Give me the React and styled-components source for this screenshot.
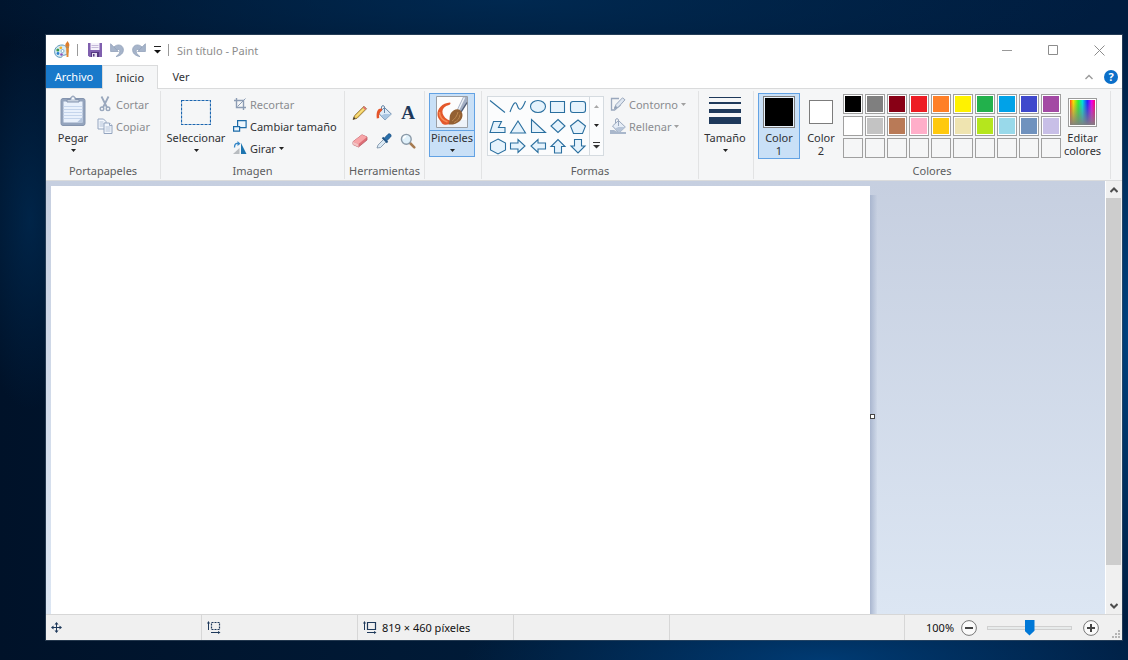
import React, { useState } from 'react';
import styled, { createGlobalStyle, css } from 'styled-components';

const colorText = '#303134';
const colorMuted = '#8a8c90';
const colorBorder = '#dadbdc';
const colorRibbon = '#f5f6f7';
const colorAccent = '#1979ca';
const colorNavy = '#1e395b';
const colorActive = '#c9e0f7';
const colorActiveBorder = '#62a2e4';

const GlobalStyle = createGlobalStyle`
    * {
        box-sizing: border-box;
    }
    body {
        margin: 0;
        font-family: 'Noto Sans', 'Open Sans', sans-serif;
        font-size: 11px;
        color: ${colorText};
    }
    button {
        margin: 0;
        padding: 0;
        border: 0;
        background: none;
        color: inherit;
        font: inherit;
    }
    svg {
        display: block;
        flex: none;
    }
`;

const Desktop = styled('div')`
    display: flex;
    height: 100vh;
    padding: 35px 6px 20px 46px;
    background:
        radial-gradient(ellipse 60px 190px at 30px 220px, rgba(0, 48, 92, 0.6), transparent),
        radial-gradient(ellipse 360px 70px at 73% 100%, rgba(0, 66, 128, 0.8), transparent),
        radial-gradient(ellipse 30px 300px at 100% 330px, rgba(0, 76, 145, 0.8), transparent),
        radial-gradient(ellipse 600px 80px at 45% 0, rgba(0, 46, 90, 0.7), transparent),
        linear-gradient(90deg, #001229, #001c3a 50%, #001d40);
`;

const Window = styled('main')`
    display: flex;
    flex: 1;
    flex-direction: column;
    min-width: 0;
    background: white;
    box-shadow: 0 0 0 1px rgba(60, 80, 100, 0.6);
`;

const TitleBar = styled('header')`
    display: flex;
    align-items: center;
    height: 30px;
    padding-left: 8px;
`;

const QuickTools = styled('div')`
    display: flex;
    align-items: center;
    gap: 8px;
    padding-left: 10px;
`;

const Rule = styled('span')`
    width: 1px;
    height: 12px;
    margin-left: 7px;
    background: #9a9a9a;
`;

const Title = styled('h1')`
    flex: 1;
    margin: 0 0 0 8px;
    font-size: 11px;
    font-weight: 400;
    color: #8c8c8c;
`;

const WindowButton = styled('button')`
    display: flex;
    align-items: center;
    justify-content: center;
    width: 46px;
    height: 28px;
`;

const TabRow = styled('nav')`
    display: flex;
    height: 24px;
    border-bottom: 1px solid ${colorBorder};
`;

const Tab = styled('button')`
    width: ${({ $wide }) => ($wide ? '56px' : '46px')};
    height: 23px;
    ${({ $file }) => $file && css`
        background: ${colorAccent};
        color: white;
    `}
    ${({ $active }) => $active && css`
        height: 24px;
        border: 1px solid ${colorBorder};
        border-bottom: 0;
        background: ${colorRibbon};
    `}
`;

const TabTools = styled('div')`
    display: flex;
    align-items: center;
    gap: 11px;
    margin-left: auto;
    padding-right: 4px;
`;

const Ribbon = styled('div')`
    display: flex;
    height: 92px;
    padding: 2px 0 1px;
    border-bottom: 1px solid ${colorBorder};
    background: ${colorRibbon};
`;

const GroupBox = styled('section')`
    display: flex;
    flex: none;
    flex-direction: column;
    justify-content: space-between;
    width: ${({ $width }) => $width}px;
    padding-top: 2px;
    border-right: 1px solid #e2e3e4;
`;

const GroupBody = styled('div')`
    display: flex;
    align-items: flex-start;
    padding-left: ${({ $inset }) => $inset}px;
`;

const GroupLabel = styled('h2')`
    margin: 0;
    font-size: 11px;
    font-weight: 400;
    line-height: 17px;
    text-align: center;
    color: #5c5d60;
`;

const BigButtonBox = styled('button')`
    width: ${({ $width }) => $width}px;
    padding-bottom: ${({ $tall }) => ($tall ? '1px' : '0')};
    border: 1px solid ${({ $active }) => ($active ? colorActiveBorder : 'transparent')};
    background: ${({ $active }) => ($active ? colorActive : 'none')};
`;

const BigIcon = styled('span')`
    display: flex;
    align-items: center;
    justify-content: center;
    height: 37px;
    border-bottom: 1px solid ${({ $split }) => ($split ? colorActiveBorder : 'transparent')};
`;

const BigLabel = styled('span')`
    display: flex;
    flex-direction: column;
    align-items: center;
    line-height: 13px;
    white-space: nowrap;
`;

const ArrowLine = styled('span')`
    display: flex;
    align-items: center;
    height: 12px;
`;

const Rows = styled('div')`
    display: flex;
    flex-direction: column;
    margin-left: ${({ $gap }) => $gap}px;
`;

const RowButton = styled('button')`
    display: flex;
    align-items: center;
    gap: 3px;
    height: 22px;
    white-space: nowrap;
    &:disabled {
        color: ${colorMuted};
    }
`;

const ToolGrid = styled('div')`
    display: grid;
    grid-template-columns: repeat(3, 24px);
    grid-auto-rows: 28px;
    padding-top: 6px;
`;

const ToolButton = styled('button')`
    display: flex;
    align-items: center;
    justify-content: center;
`;

const Letter = styled('span')`
    font: bold 19px 'Liberation Serif', serif;
    color: ${colorNavy};
`;

const Gallery = styled('div')`
    display: flex;
    height: 60px;
    margin-top: 3px;
    border: 1px solid #d5dbe0;
    background: #fbfcfd;
`;

const ShapeGrid = styled('div')`
    display: grid;
    grid-template-columns: repeat(5, 20px);
    grid-auto-rows: 20px;
    width: 101px;
`;

const GalleryScroll = styled('div')`
    display: flex;
    flex-direction: column;
    width: 14px;
    border-left: 1px solid #d5dbe0;
`;

const GalleryButton = styled('button')`
    display: flex;
    flex: 1;
    align-items: center;
    justify-content: center;
`;

const ColorSample = styled('span')`
    width: ${({ $size }) => $size}px;
    height: ${({ $size }) => $size}px;
    border: 1px solid #7c7c7c;
    background: ${({ $color }) => $color};
    box-shadow: inset 0 0 0 1px ${({ $size }) => ($size > 30 ? '#e8f2fc' : 'white')};
`;

const Palette = styled('div')`
    display: grid;
    grid-template-columns: repeat(10, 20px);
    grid-auto-rows: 20px;
    gap: 2px;
    margin: 1px 0 0 1px;
`;

const Swatch = styled('button')`
    border: 1px solid #a0a0a0;
    background: ${({ $color }) => $color || colorRibbon};
    box-shadow: inset 0 0 0 1px ${({ $color }) => ($color ? 'white' : colorRibbon)};
`;

const Spectrum = styled('span')`
    width: 29px;
    height: 29px;
    border: 1px solid #9c9c9c;
    background:
        linear-gradient(transparent 10%, #808080),
        linear-gradient(90deg, #f22, #fd0 16%, #3e3 34%, #0dd 50%, #22f 68%, #e0e 84%, #f04);
    box-shadow: inset 0 0 0 1px white;
`;

const WorkArea = styled('div')`
    display: flex;
    flex: 1;
    min-height: 0;
    background: linear-gradient(#c6cfe0, #dce6f3);
`;

const Viewport = styled('div')`
    display: flex;
    flex: 1;
    align-items: flex-start;
    overflow: hidden;
    padding: 5px 0 0 5px;
`;

const Sheet = styled('div')`
    flex: none;
    width: 819px;
    height: 460px;
    background: white;
`;

const SheetEdge = styled('div')`
    display: flex;
    align-items: center;
    width: 7px;
    height: 460px;
    background: linear-gradient(90deg, #a9b6cf, rgba(190, 200, 220, 0.2)) 0 9px no-repeat;
`;

const Handle = styled('span')`
    width: 5px;
    height: 5px;
    border: 1px solid #444;
    background: white;
`;

const ScrollBar = styled('div')`
    display: flex;
    flex-direction: column;
    width: 17px;
    border-left: 1px solid white;
    background: #f0f0f0;
`;

const ScrollButton = styled('button')`
    display: flex;
    align-items: center;
    justify-content: center;
    height: 17px;
`;

const ScrollTrack = styled('div')`
    flex: 1;
`;

const ScrollThumb = styled('div')`
    height: 92%;
    margin-right: 1px;
    background: #cdcdcd;
`;

const StatusBar = styled('footer')`
    display: flex;
    height: 26px;
    border-top: 1px solid #d7d7d7;
    background: #f0f0f0;
    color: #111;
`;

const StatusCell = styled('div')`
    display: flex;
    flex: ${({ $grow }) => ($grow ? '1' : 'none')};
    align-items: center;
    gap: 5px;
    width: 156px;
    padding-left: 5px;
    border-right: 1px solid #d7d7d7;
`;

const Zoom = styled('div')`
    display: flex;
    align-items: center;
    padding-left: 21px;
`;

const ZoomLabel = styled('label')`
    width: 35px;
`;

const Slider = styled('input')`
    appearance: none;
    width: 85px;
    height: 16px;
    margin: 0 11px 0 10px;
    background: none;
    &::-webkit-slider-runnable-track {
        height: 4px;
        border: 1px solid #d0d0d0;
        background: #e7eaea;
    }
    &::-webkit-slider-thumb {
        appearance: none;
        width: 10px;
        height: 16px;
        margin-top: -7px;
        background: #0078d7;
        clip-path: polygon(0 0, 100% 0, 100% 70%, 50% 100%, 0 70%);
    }
`;

const Grip = styled('span')`
    display: flex;
    align-items: flex-end;
    height: 100%;
    padding: 0 2px 2px 13px;
`;

const Caret = ({ color = '#222' }) => (
    <svg width="5" height="3" viewBox="0 0 5 3">
        <path d="M0 0h5L2.500 3z" fill={color} />
    </svg>
);

const CaretUp = () => (
    <svg width="5" height="3" viewBox="0 0 5 3">
        <path d="M0 3h5L2.500 0z" fill="#a8a8a8" />
    </svg>
);

const PaintLogo = () => (
    <svg width="16" height="18" viewBox="0 0 16 18">
        <path d="M8 4C3.600 4 .6 7 .6 10.800c0 3.400 2.600 5.600 5.700 5.600 2 0 1.700-1.600 3-2 1.900-.5 4.400-.5 4.700-3.600C14.300 7 11.400 4 8 4z" fill="#d8ecf6" stroke="#6199b9" />
        <circle cx="3.800" cy="9" r="1.500" fill="#3a9c4a" />
        <circle cx="6.800" cy="6.800" r="1.400" fill="#efb22c" />
        <circle cx="4" cy="12.500" r="1.400" fill="#2b7fd0" />
        <circle cx="7.500" cy="13.500" r="1.300" fill="#8b54b5" />
        <circle cx="8.500" cy="10" r="1.500" fill="white" stroke="#6199b9" strokeWidth=".7" />
        <path d="M12 5h3l-.6 11h-1.800z" fill="#e38a32" />
        <path d="M11.500 5.500c-.6-3 .8-3 2-5.500 1 2 2.500 3 1.700 5.500z" fill="#dd7c2b" />
        <path d="M11.800 5.500h3.200v1.500h-3.200z" fill="#b98a55" />
    </svg>
);

const SaveIcon = () => (
    <svg width="14" height="14" viewBox="0 0 14 14">
        <path d="M0 0h14v14H1.500L0 12.500z" fill="#7f5fae" />
        <path d="M2.500 0h9v7h-9z" fill="#f4f1fa" />
        <path d="M3.500 2.500h7M3.500 4.500h7" stroke="#c5b9d9" />
        <path d="M3 9h8v5H3z" fill="#54377f" />
        <path d="M4 10h5v4H4z" fill="#e5dff0" />
        <path d="M5 11h1.500v2.500H5z" fill="#54377f" />
    </svg>
);

const UndoIcon = ({ flip }) => (
    <svg width="14" height="14" viewBox="0 0 14 14">
        <g transform={flip ? 'translate(14 0) scale(-1 1)' : undefined}>
            <path d="M4 4C7 .8 12.500 1.300 13.300 6c.6 4-2.500 6.800-7.300 7.600 3-2.200 4.300-4.200 3.700-6.100C9.200 6 7.500 6 6 7.500z" fill="#a6b4ca" stroke="#93a2ba" strokeWidth=".8" />
            <path d="M.6.8v7.700h7.800z" fill="#a6b4ca" stroke="#93a2ba" strokeWidth=".8" />
        </g>
    </svg>
);

const MenuIcon = () => (
    <svg width="7" height="8" viewBox="0 0 7 8">
        <path d="M0 .5h7" stroke="#222" />
        <path d="M0 4h7L3.500 7.500z" fill="#111" />
    </svg>
);

const MinimizeIcon = () => (
    <svg width="10" height="10" viewBox="0 0 10 10"><path d="M0 5.500h10" stroke="#999" /></svg>
);

const MaximizeIcon = () => (
    <svg width="10" height="10" viewBox="0 0 10 10">
        <path d="M.5.500h9v9h-9z" fill="none" stroke="#8c8c8c" />
    </svg>
);

const CloseIcon = () => (
    <svg width="11" height="11" viewBox="0 0 11 11"><path d="M.5.500l10 10M10.500.500l-10 10" stroke="#8c8c8c" /></svg>
);

const ChevronIcon = ({ down, bold }) => (
    <svg width="8" height="6" viewBox="0 0 8 6">
        <path
            d={down ? 'M.5 1L4 4.500 7.500 1' : 'M.5 5L4 1.500 7.500 5'}
            fill="none"
            stroke={bold ? '#4d4d4d' : '#9a9a9a'}
            strokeWidth={bold ? 2 : 1.4}
        />
    </svg>
);

const HelpMark = styled('button')`
    width: 14px;
    height: 14px;
    border-radius: 50%;
    background: #0b6fc9;
    font-weight: 700;
    line-height: 14px;
    color: white;
`;

const PasteIcon = () => (
    <svg width="26" height="34" viewBox="0 0 26 34">
        <rect x="1" y="3.500" width="24" height="27" rx="2" fill="#94a4bd" stroke="#8494ae" />
        <path d="M3.500 6.500h19v21h-19z" fill="#e9f1fc" />
        <path d="M3.500 11.500h19M3.500 14.500h19M3.500 17.500h19M3.500 20.500h19M3.500 23.500h19" stroke="#c5d5ec" />
        <path d="M17 27.500l5.500-5.500v5.500z" fill="#b5c5dd" />
        <path d="M7 7V4.500h3.500C10.500 0 15.500 0 15.500 4.500H19V7z" fill="#c5cfdd" stroke="#8494ae" />
        <circle cx="13" cy="3.500" r="1" fill="#fff" />
    </svg>
);

const CutIcon = () => (
    <svg width="16" height="16" viewBox="0 0 16 16" fill="none" stroke="#9aa8bd">
        <path d="M4.500.500l5.500 11M11.500.500L6 11.500" strokeWidth="1.800" />
        <circle cx="5" cy="12.800" r="1.800" strokeWidth="1.400" />
        <circle cx="11" cy="12.800" r="1.800" strokeWidth="1.400" />
    </svg>
);

const CopyIcon = () => (
    <svg width="16" height="16" viewBox="0 0 16 16" fill="#f3f7fd" stroke="#94a5bf">
        <path d="M1 1h5.500L9 3.500V11H1z" />
        <path d="M2.500 4h4M2.500 6h4M2.500 8h4" stroke="#b5c3d8" />
        <path d="M7 5h5.500L15 7.500V15.500H7z" />
        <path d="M8.500 9h5M8.500 11h5M8.500 13h5" stroke="#b5c3d8" />
        <path d="M12.500 5v2.500H15" />
    </svg>
);

const SelectIcon = () => (
    <svg width="30" height="25" viewBox="0 0 30 25">
        <path d="M.5.500h29v24H.500z" fill="none" stroke="#1c66b0" strokeWidth="1.200" strokeDasharray="3 1" />
    </svg>
);

const CropIcon = () => (
    <svg width="14" height="14" viewBox="0 0 14 14" fill="none" stroke="#8c9cb4" strokeWidth="1.400">
        <path d="M3.500 1v9.500H13M1 3.500h9.500V13" />
        <path d="M4.500 9.500L12.500 1.500" strokeWidth="1" />
    </svg>
);

const ResizeIcon = () => (
    <svg width="14" height="14" viewBox="0 0 14 14" fill="#edf6fd" stroke="#1c6ba8" strokeWidth="1.200">
        <path d="M4.600 1.600h8.500v7H4.600z" />
        <path d="M.6 7.600h6v4.500h-6z" />
    </svg>
);

const RotateIcon = () => (
    <svg width="14" height="14" viewBox="0 0 14 14">
        <path d="M0 13h6.500V7z" fill="#b8bcc0" />
        <path d="M8 13V2l5.500 11z" fill="#1d75b0" />
        <path d="M1.500 6.500C1.500 3 3 2 5 2.500" fill="none" stroke="#3486c7" strokeWidth="1.300" />
        <path d="M4.500 0l3 2.700-3 2.300z" fill="#3486c7" />
    </svg>
);

const PencilIcon = () => (
    <svg width="16" height="16" viewBox="0 0 16 16">
        <path d="M1 14.500l1.500-3.800L12 1.300l2.500 2.500-9.500 9.500z" fill="#f0cb58" stroke="#80622c" strokeWidth=".8" />
        <path d="M4 11.500l8-8" stroke="#fff0a8" />
        <path d="M10.800 2.500L12 1.300l2.500 2.500-1.200 1.200z" fill="#e16f78" />
        <path d="M1 14.500l.9-2.600 1.700 1.700z" fill="#333" />
    </svg>
);

const BucketIcon = ({ muted }) => (
    <svg width="16" height="16" viewBox="0 0 16 16">
        <path d="M8.500 2.500L15.300 9l-6.300 6L2.500 8z" fill={muted ? '#e6edf6' : '#dceaf7'} stroke={muted ? '#9aa8bd' : '#6787a8'} />
        <path d="M8.500 9h6.800L9 15l-4-4.500z" fill={muted ? '#b7c5d8' : '#a9c6e2'} />
        <path d="M8.500 8V2c0-1.800-3-1.800-3 0v3" fill="none" stroke={muted ? '#9aa8bd' : '#6787a8'} />
        {muted
            ? <path d="M0 12h4l4 2h8v2H0z" fill="#a9b7cb" />
            : <path d="M6 3.500C2 3 0 6 .8 13.500l2.400-.5C2.700 9.500 3.500 7.500 6 5.500z" fill="#e5552a" />}
    </svg>
);

const EraserIcon = () => (
    <svg width="16" height="14" viewBox="0 0 16 14">
        <path d="M10 .8l5 2.200V6L6.500 13 1 10.500V7.700z" fill="#dd6d76" stroke="#b95d66" strokeWidth=".8" />
        <path d="M10 .8l5 2.200L6.500 10 1 7.700z" fill="#f7a5a8" />
        <path d="M6.500 10v3L1 10.500V7.700z" fill="#f3c3c3" />
    </svg>
);

const PickerIcon = () => (
    <svg width="16" height="16" viewBox="0 0 16 16">
        <path d="M1 15l1-3 6-6 2.500 2.500-6 6z" fill="#dceaf5" stroke="#738ba3" strokeWidth=".8" />
        <path d="M6.500 4.500l5 5" stroke="#235685" strokeWidth="2" />
        <path d="M8 5.500L12 1.300c2-1.500 4 .8 2.600 2.700L10.500 8z" fill="#286fab" stroke="#1b4e82" strokeWidth=".8" />
    </svg>
);

const LensIcon = () => (
    <svg width="16" height="16" viewBox="0 0 16 16">
        <path d="M10 10l4.300 4.300" stroke="#a67b51" strokeWidth="2.500" strokeLinecap="round" />
        <circle cx="6.300" cy="6.300" r="4.900" fill="#dff0fa" stroke="#8b9aa8" strokeWidth="1.400" />
        <path d="M3.500 6c0-1.500 1-2.500 2.500-2.500" stroke="white" fill="none" strokeWidth="1.300" />
    </svg>
);

const BrushIcon = () => (
    <svg width="32" height="32" viewBox="0 0 32 32">
        <path d="M.5.500h31v31H.5z" fill="#fdfdfd" stroke="#9a9fa5" />
        <path d="M1 24h30v7H1z" fill="#edf2f8" />
        <path d="M14 6.500C6 7 1 13 1.500 19c.5 4 3.500 6 4.500 8.500 3 2.500 8 1 10-1.500-1-2-3-1.500-4.500-2.500C4.500 19 4.500 11 13 9c1.500-.5 2-2 1-2.500z" fill="#e4582b" />
        <path d="M3.500 16c0 5 3.500 8.500 8 10" fill="none" stroke="#f58c55" strokeWidth="1.500" />
        <path d="M21 13.500L27 1h4v7l-5.500 8.500z" fill="#a3afc4" />
        <path d="M22.500 14l6-12.500" stroke="#eef3f8" strokeWidth="1.500" />
        <path d="M25 16L31 6.500" stroke="#4e5c74" strokeWidth="1.300" />
        <path d="M12.500 28.500c2-3 0-8 2.500-11.500 2.500-3.500 6.500-5 9.500-2.500 3 2.800 2.500 7.500-.5 10.500-3 2.800-7.500 4-11.500 3.500z" fill="#936033" />
        <path d="M16 25c3-2 5-5 6-9M18 26.500c4-2 5.500-4 6-8" stroke="#bd8850" fill="none" />
    </svg>
);

const SizeIcon = () => (
    <svg width="32" height="30" viewBox="0 0 32 30" fill={colorNavy}>
        <path d="M0 0h32v1H0zM0 5h32v2H0zM0 12h32v4H0zM0 20h32v7H0z" />
    </svg>
);

const OutlineIcon = () => (
    <svg width="16" height="14" viewBox="0 0 16 14" fill="none" stroke="#9aa8bd">
        <path d="M9 1.500H1.500v11.500h3l6-5" strokeWidth="1.300" />
        <path d="M4.500 11.500l1.500-4L12.500.8l2.500 2L8.500 10z" fill="#dfe7f1" />
        <path d="M4.500 11.500l1-2.500L7 10.500z" fill="#7f8fa7" />
    </svg>
);

const shapes = [
    ['Línea', 'M2 3.500l15 12'],
    ['Curva', 'M2 15C6 4 8 4 9.500 9s4 5 8-5'],
    ['Elipse', 'M2.500 9.500a7.500 6 0 1 0 15 0a7.500 6 0 1 0-15 0z'],
    ['Rectángulo', 'M2.500 4.500h14v11h-14z'],
    ['Rectángulo redondeado', 'M5 4.500h10q2.500 0 2.500 2.500v6q0 2.500-2.500 2.500H5q-2.500 0-2.500-2.500V7q0-2.500 2.500-2.500z'],
    ['Polígono', 'M5.500 4.500h8l-3 6h6.500v5h-15z'],
    ['Triángulo', 'M10 4l7.500 12h-15z'],
    ['Triángulo rectángulo', 'M3.500 2.500v13h14z'],
    ['Rombo', 'M10 2.500l7 6.500-7 6.500-7-6.500z'],
    ['Pentágono', 'M10 3l7.500 6-3 7.500h-9L2.500 9z'],
    ['Hexágono', 'M10 2l7.500 4v7L10 17l-7.500-4V6z'],
    ['Flecha derecha', 'M2.500 6h7.500V2.500l7 6.500-7 6.500V12H2.500z'],
    ['Flecha izquierda', 'M17.500 6H10V2.500L3 9l7 6.500V12h7.500z'],
    ['Flecha arriba', 'M6.500 16V9.500H3L10 2.500l7 7h-3.500V16z'],
    ['Flecha abajo', 'M6.500 2.500V9H3l7 7 7-7h-3.500V2.500z'],
];

const ShapeButton = ({ name, d, open }) => (
    <ToolButton aria-label={name}>
        <svg width="20" height="20" viewBox="0 0 20 20">
            <path d={d} fill={open ? 'none' : '#e6f3fc'} stroke="#2a6f9f" strokeWidth="1.100" />
        </svg>
    </ToolButton>
);

const MoreIcon = () => (
    <svg width="7" height="7" viewBox="0 0 7 7">
        <path d="M0 .5h7" stroke="#333" />
        <path d="M0 3h7L3.500 6.500z" fill="#333" />
    </svg>
);

const CursorIcon = () => (
    <svg width="11" height="11" viewBox="0 0 11 11">
        <path d="M5.500 1v9M1 5.500h9" stroke={colorNavy} />
        <path d="M5.500 0L3.500 2.500h4zM5.500 11l-2-2.500h4zM0 5.500l2.500-2v4zM11 5.500l-2.500-2v4z" fill={colorNavy} />
    </svg>
);

const ExtentIcon = ({ dashed }) => (
    <svg width="14" height="13" viewBox="0 0 14 13" fill="none" stroke={colorNavy}>
        <path d="M4.500 1.500h8v7h-8z" strokeWidth="1.200" strokeDasharray={dashed ? '2 1' : undefined} />
        <path d="M1.500 1v8M4 11.500h8" />
        <path d="M1.500 0L0 2.500h3zM13.500 11.500l-2.500-1.500v3z" fill={colorNavy} stroke="none" />
    </svg>
);

const ZoomIcon = ({ plus }) => (
    <svg width="16" height="16" viewBox="0 0 16 16">
        <circle cx="8" cy="8" r="7.400" fill="#fafafa" stroke="#777" />
        <path d={plus ? 'M4 8h8M8 4v8' : 'M4 8h8'} stroke="#444" strokeWidth="2" />
    </svg>
);

const GripIcon = () => (
    <svg width="8" height="8" viewBox="0 0 8 8" fill="#b5b5b5">
        <path d="M6 0h2v2H6zM3 3h2v2H3zM6 3h2v2H6zM0 6h2v2H0zM3 6h2v2H3zM6 6h2v2H6z" />
    </svg>
);

const Group = ({ label, width, inset, children }) => (
    <GroupBox $width={width}>
        <GroupBody $inset={inset}>{children}</GroupBody>
        {label && <GroupLabel>{label}</GroupLabel>}
    </GroupBox>
);

const BigButton = ({ icon, width, label, second, active, split, onClick }) => (
    <BigButtonBox $width={width} $active={active} $tall={Boolean(second)} onClick={onClick}>
        <BigIcon $split={split}>{icon}</BigIcon>
        <BigLabel>
            <span>{label}</span>
            {second ? <span>{second}</span> : <ArrowLine><Caret /></ArrowLine>}
        </BigLabel>
    </BigButtonBox>
);

const palette = [
    '#000000', '#7f7f7f', '#880015', '#ed1c24', '#ff7f27', '#fff200', '#22b14c', '#00a2e8', '#3f48cc', '#a349a4',
    '#ffffff', '#c3c3c3', '#b97a57', '#ffaec9', '#ffc90e', '#efe4b0', '#b5e61d', '#99d9ea', '#7092be', '#c8bfe7',
    ...Array(10).fill(null),
];

const App = () => {
    const [slot, setSlot] = useState(0);
    const [colors, setColors] = useState(['#000000', '#ffffff']);
    const [zoom, setZoom] = useState(50);

    const pickColor = color => {
        if (color) {
            setColors(colors.map((current, index) => (index === slot ? color : current)));
        }
    };

    return (
        <Desktop>
            <GlobalStyle />
            <Window>
                <TitleBar>
                    <PaintLogo />
                    <Rule />
                    <QuickTools>
                        <button aria-label="Guardar"><SaveIcon /></button>
                        <button aria-label="Deshacer"><UndoIcon /></button>
                        <button aria-label="Rehacer"><UndoIcon flip /></button>
                        <button aria-label="Personalizar"><MenuIcon /></button>
                    </QuickTools>
                    <Rule />
                    <Title>Sin título - Paint</Title>
                    <WindowButton aria-label="Minimizar"><MinimizeIcon /></WindowButton>
                    <WindowButton aria-label="Maximizar"><MaximizeIcon /></WindowButton>
                    <WindowButton aria-label="Cerrar"><CloseIcon /></WindowButton>
                </TitleBar>
                <TabRow>
                    <Tab $wide $file>Archivo</Tab>
                    <Tab $wide $active>Inicio</Tab>
                    <Tab>Ver</Tab>
                    <TabTools>
                        <button aria-label="Contraer la cinta"><ChevronIcon /></button>
                        <HelpMark>?</HelpMark>
                    </TabTools>
                </TabRow>
                <Ribbon>
                    <Group label="Portapapeles" width={115} inset={4}>
                        <BigButton icon={<PasteIcon />} width={46} label="Pegar" />
                        <Rows $gap={1}>
                            <RowButton disabled><CutIcon />Cortar</RowButton>
                            <RowButton disabled><CopyIcon />Copiar</RowButton>
                        </Rows>
                    </Group>
                    <Group label="Imagen" width={184} inset={4}>
                        <BigButton icon={<SelectIcon />} width={62} label="Seleccionar" />
                        <Rows $gap={6}>
                            <RowButton disabled><CropIcon />Recortar</RowButton>
                            <RowButton><ResizeIcon />Cambiar tamaño</RowButton>
                            <RowButton><RotateIcon />Girar <Caret /></RowButton>
                        </Rows>
                    </Group>
                    <Group label="Herramientas" width={80} inset={3}>
                        <ToolGrid>
                            <ToolButton aria-label="Lápiz"><PencilIcon /></ToolButton>
                            <ToolButton aria-label="Relleno"><BucketIcon /></ToolButton>
                            <ToolButton aria-label="Texto"><Letter>A</Letter></ToolButton>
                            <ToolButton aria-label="Borrador"><EraserIcon /></ToolButton>
                            <ToolButton aria-label="Selector de color"><PickerIcon /></ToolButton>
                            <ToolButton aria-label="Lupa"><LensIcon /></ToolButton>
                        </ToolGrid>
                    </Group>
                    <Group width={57} inset={4}>
                        <BigButton icon={<BrushIcon />} width={46} label="Pinceles" active split />
                    </Group>
                    <Group label="Formas" width={217} inset={5}>
                        <Gallery>
                            <ShapeGrid>
                                {shapes.map(([name, d], index) => (
                                    <ShapeButton key={name} name={name} d={d} open={index < 2} />
                                ))}
                            </ShapeGrid>
                            <GalleryScroll>
                                <GalleryButton aria-label="Subir"><CaretUp /></GalleryButton>
                                <GalleryButton aria-label="Bajar"><Caret /></GalleryButton>
                                <GalleryButton aria-label="Más"><MoreIcon /></GalleryButton>
                            </GalleryScroll>
                        </Gallery>
                        <Rows $gap={6}>
                            <RowButton disabled><OutlineIcon />Contorno <Caret color="#a0a0a0" /></RowButton>
                            <RowButton disabled><BucketIcon muted />Rellenar <Caret color="#a0a0a0" /></RowButton>
                        </Rows>
                    </Group>
                    <Group width={55} inset={4}>
                        <BigButton icon={<SizeIcon />} width={44} label="Tamaño" />
                    </Group>
                    <Group label="Colores" width={357} inset={4}>
                        {colors.map((color, index) => (
                            <BigButton
                                key={index}
                                icon={<ColorSample $size={index === 0 ? 32 : 24} $color={color} />}
                                width={42}
                                label="Color"
                                second={index + 1}
                                active={slot === index}
                                onClick={() => setSlot(index)}
                            />
                        ))}
                        <Palette>
                            {palette.map((color, index) => (
                                <Swatch
                                    key={index}
                                    aria-label={color || 'Vacío'}
                                    $color={color}
                                    onClick={() => pickColor(color)}
                                />
                            ))}
                        </Palette>
                        <BigButton icon={<Spectrum />} width={43} label="Editar" second="colores" />
                    </Group>
                </Ribbon>
                <WorkArea>
                    <Viewport>
                        <Sheet />
                        <SheetEdge><Handle /></SheetEdge>
                    </Viewport>
                    <ScrollBar>
                        <ScrollButton aria-label="Desplazar arriba"><ChevronIcon bold /></ScrollButton>
                        <ScrollTrack><ScrollThumb /></ScrollTrack>
                        <ScrollButton aria-label="Desplazar abajo"><ChevronIcon bold down /></ScrollButton>
                    </ScrollBar>
                </WorkArea>
                <StatusBar>
                    <StatusCell><CursorIcon /></StatusCell>
                    <StatusCell><ExtentIcon dashed /></StatusCell>
                    <StatusCell><ExtentIcon />819 × 460 píxeles</StatusCell>
                    <StatusCell />
                    <StatusCell $grow />
                    <Zoom>
                        <ZoomLabel htmlFor="zoom">100%</ZoomLabel>
                        <button aria-label="Alejar"><ZoomIcon /></button>
                        <Slider
                            id="zoom"
                            type="range"
                            value={zoom}
                            onChange={event => setZoom(Number(event.target.value))}
                        />
                        <button aria-label="Acercar"><ZoomIcon plus /></button>
                        <Grip><GripIcon /></Grip>
                    </Zoom>
                </StatusBar>
            </Window>
        </Desktop>
    );
};

export default App;
